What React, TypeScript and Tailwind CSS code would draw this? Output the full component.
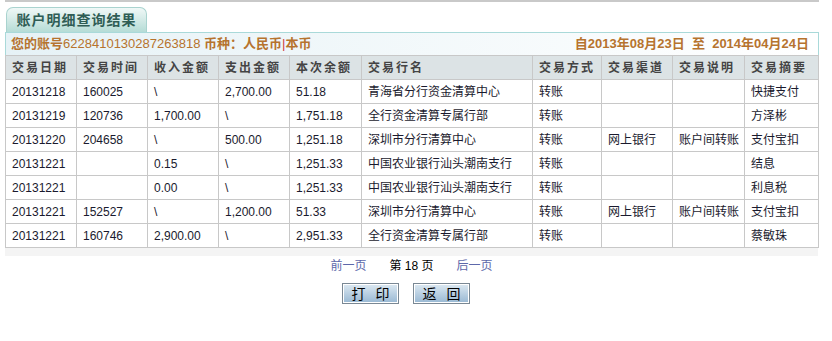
const ROWS = [
  ['20131218', '160025', '\\', '2,700.00', '51.18', '青海省分行资金清算中心', '转账', '', '', '快捷支付'],
  ['20131219', '120736', '1,700.00', '\\', '1,751.18', '全行资金清算专属行部', '转账', '', '', '方泽彬'],
  ['20131220', '204658', '\\', '500.00', '1,251.18', '深圳市分行清算中心', '转账', '网上银行', '账户间转账', '支付宝扣'],
  ['20131221', '', '0.15', '\\', '1,251.33', '中国农业银行汕头潮南支行', '转账', '', '', '结息'],
  ['20131221', '', '0.00', '\\', '1,251.33', '中国农业银行汕头潮南支行', '转账', '', '', '利息税'],
  ['20131221', '152527', '\\', '1,200.00', '51.33', '深圳市分行清算中心', '转账', '网上银行', '账户间转账', '支付宝扣'],
  ['20131221', '160746', '2,900.00', '\\', '2,951.33', '全行资金清算专属行部', '转账', '', '', '蔡敏珠'],
]

const HEADS = ['交易日期', '交易时间', '收入金额', '支出金额', '本次余额', '交易行名', '交易方式', '交易渠道', '交易说明', '交易摘要']

const COLS = ['w-[71px]', 'w-[71px]', 'w-[71px]', 'w-[71px]', 'w-[72px]', 'w-[171px]', 'w-[69px]', 'w-[71px]', 'w-[72px]', 'w-[74px]']

export default function App() {
  return (
    <div className="w-[832px] h-[341px] bg-white font-['Liberation_Sans','Noto_Sans_CJK_SC',sans-serif] text-[12px] text-[#111]">
      <div className="ml-[5px] w-[814px] h-[2px] bg-[#c9c9c9]" />

      <div className="ml-[5px] w-[813px]">
        {/* tab */}
        <div className="mt-[5px] flex">
          <div className="ml-[1px] w-[141px] h-[25px] rounded-t-[7px] border border-b-0 border-[#a9d3cf] bg-gradient-to-b from-[#f0f8f7] to-[#b5dcd6] flex items-center justify-center text-[14px] font-bold text-[#2f5d55] tracking-[1px]">
            账户明细查询结果
          </div>
        </div>

        {/* account bar */}
        <div className="h-[23px] w-[814px] border border-b-0 border-[#a9d9d9] bg-gradient-to-r from-[#e6f2f6] to-white flex items-center justify-between px-[5px] text-[13px] font-bold text-[#b6732e]">
          <span>
            您的账号<span className="font-normal">6228410130287263818</span> 币种：人民币<span className="font-normal text-[#d04040]">|</span>本币
          </span>
          <span className="pr-[4px]">自2013年08月23日&nbsp;&nbsp;至&nbsp;&nbsp;2014年04月24日</span>
        </div>

        {/* table */}
        <table className="table-fixed border-collapse w-[813px]">
          <colgroup>
            {COLS.map((c, i) => <col key={i} className={c} />)}
          </colgroup>
          <thead>
            <tr className="bg-[#dce3e5]">
              {HEADS.map(h => (
                <th key={h} className="h-[24px] border border-[#c8c8c8] px-[6px] text-left font-bold text-[#444] tracking-[2px] whitespace-nowrap">{h}</th>
              ))}
            </tr>
          </thead>
          <tbody>
            {ROWS.map((r, i) => (
              <tr key={i}>
                {r.map((c, j) => (
                  <td key={j} className="h-[24px] border border-[#c8c8c8] px-[6px] whitespace-nowrap text-[#1a1a2e]">{c}</td>
                ))}
              </tr>
            ))}
          </tbody>
        </table>
        <div className="h-[8px] bg-[#f4f4f4]" />

        {/* pager */}
        <div className="mt-[2px] flex justify-center items-center gap-[23px] h-[16px]">
          <span className="text-[#5d68aa]">前一页</span>
          <span className="text-black">第 18 页</span>
          <span className="text-[#5d68aa]">后一页</span>
        </div>

        {/* buttons */}
        <div className="mt-[9px] flex justify-center gap-[14px] pr-[11px]">
          {['打 印', '返 回'].map(b => (
            <button key={b} className="w-[57px] h-[21px] border border-[#7a8894] shadow-[inset_0_0_0_1px_#ffffff] bg-gradient-to-b from-[#dde9f2] to-[#98b8d3] text-[14px] text-black leading-none tracking-[3px] pl-[3px]">
              {b}
            </button>
          ))}
        </div>
      </div>
    </div>
  )
}
